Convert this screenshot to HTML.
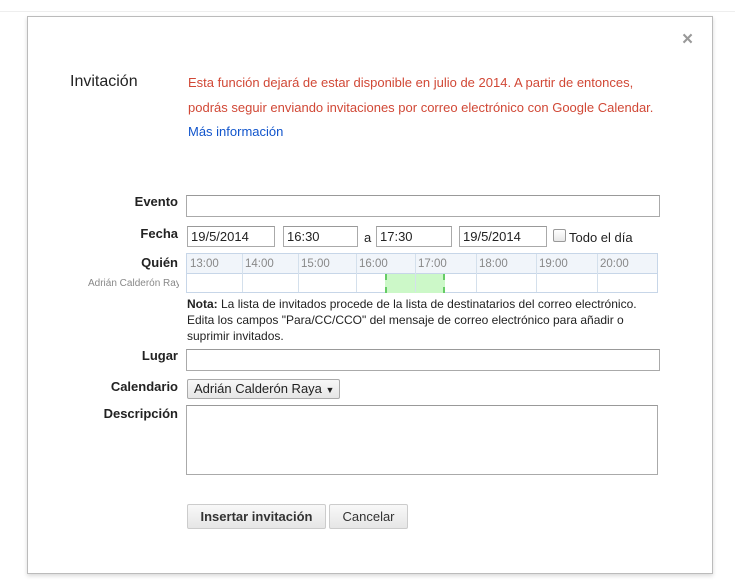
<!DOCTYPE html>
<html><head><meta charset="utf-8"><style>
body{margin:0;width:735px;height:583px;background:#fff;font-family:"Liberation Sans",Arial,sans-serif;position:relative;overflow:hidden}
.a{position:absolute}
.dlg{left:27px;top:16px;width:684px;height:556px;border:1px solid #bbb;background:#fff;box-shadow:0 2px 4px rgba(0,0,0,.15)}
.lbl{font-size:13px;font-weight:bold;color:#222;text-align:right;width:120px;left:58px}
.inp{border:1px solid #aaa;border-top-color:#999;background:#fff;box-sizing:border-box;font-size:13px;color:#222;padding:3px 3px;line-height:14px}
.red{color:#d14836;font-size:13px;left:188px;line-height:25px}
.btn{border:1px solid #ccc;border-radius:2px;background:linear-gradient(#f8f8f8,#e6e6e6);box-sizing:border-box;font-size:13px;color:#333;text-align:center;line-height:24px}
.grid{left:186px;top:253px;width:472px;height:40px;border:1px solid #c7d6e8;box-sizing:border-box}
.col{top:0;height:100%;border-left:1px solid #d4e0ec}
.h{font-size:11.5px;color:#888;top:4px}
</style></head><body>
<div class="a" style="left:0;top:11px;width:735px;height:1px;background:#eee"></div>
<div class="a dlg"></div>
<div class="a" style="left:682px;top:29px;font-size:19px;color:#999;font-weight:bold">×</div>
<div class="a" style="left:70px;top:73px;font-size:16px;color:#222">Invitación</div>
<div class="a red" style="top:70px;white-space:nowrap">Esta función dejará de estar disponible en julio de 2014. A partir de entonces,<br>podrás seguir enviando invitaciones por correo electrónico con Google Calendar.</div>
<div class="a" style="left:188px;top:124px;font-size:13px;color:#15c">Más información</div>

<div class="a lbl" style="top:194px">Evento</div>
<div class="a inp" style="left:186px;top:195px;width:474px;height:22px"></div>

<div class="a lbl" style="top:226px">Fecha</div>
<div class="a inp" style="left:187px;top:226px;width:88px;height:21px">19/5/2014</div>
<div class="a inp" style="left:283px;top:226px;width:75px;height:21px">16:30</div>
<div class="a" style="left:364px;top:230px;font-size:13px;color:#222">a</div>
<div class="a inp" style="left:376px;top:226px;width:76px;height:21px">17:30</div>
<div class="a inp" style="left:459px;top:226px;width:88px;height:21px">19/5/2014</div>
<div class="a" style="left:553px;top:229px;width:11px;height:11px;border:1px solid #999;border-radius:2px;background:linear-gradient(#fff,#e8e8e8)"></div>
<div class="a" style="left:569px;top:230px;font-size:13px;color:#222">Todo el día</div>

<div class="a lbl" style="top:255px">Quién</div>
<div class="a" style="left:88px;top:278px;font-size:10px;color:#888;width:91px;overflow:hidden;white-space:nowrap">Adrián Calderón Raya</div>
<div class="a grid">
<div class="a" style="left:0;top:0;width:100%;height:19px;background:#f1f5fa;border-bottom:1px solid #c7d6e8"></div>
<div class="a" style="left:198px;top:20px;width:60px;height:19px;background:#ccf8c8;border-left:2px dashed #6c6;border-right:2px dashed #6c6;box-sizing:border-box"></div>
<div class="a col" style="left:55px"></div><div class="a col" style="left:111px"></div><div class="a col" style="left:169px"></div><div class="a col" style="left:228px"></div><div class="a col" style="left:289px"></div><div class="a col" style="left:349px"></div><div class="a col" style="left:410px"></div>
<div class="a h" style="left:3px">13:00</div><div class="a h" style="left:58px">14:00</div><div class="a h" style="left:114px">15:00</div><div class="a h" style="left:172px">16:00</div><div class="a h" style="left:231px">17:00</div><div class="a h" style="left:292px">18:00</div><div class="a h" style="left:352px">19:00</div><div class="a h" style="left:413px">20:00</div>
</div>
<div class="a" style="left:187px;top:296px;font-size:12px;line-height:16px;color:#222;width:470px"><b>Nota:</b> La lista de invitados procede de la lista de destinatarios del correo electrónico. Edita los campos "Para/CC/CCO" del mensaje de correo electrónico para añadir o suprimir invitados.</div>

<div class="a lbl" style="top:348px">Lugar</div>
<div class="a inp" style="left:186px;top:349px;width:474px;height:22px"></div>

<div class="a lbl" style="top:379px">Calendario</div>
<div class="a btn" style="left:187px;top:379px;width:153px;height:20px;line-height:18px;text-align:left;padding-left:6px;color:#222;border-color:#aaa">Adrián Calderón Raya <span style="font-size:9px">▼</span></div>

<div class="a lbl" style="top:406px">Descripción</div>
<div class="a inp" style="left:186px;top:405px;width:472px;height:70px"></div>

<div class="a btn" style="left:187px;top:504px;width:139px;height:25px;font-weight:bold">Insertar invitación</div>
<div class="a btn" style="left:329px;top:504px;width:79px;height:25px">Cancelar</div>
</body></html>
